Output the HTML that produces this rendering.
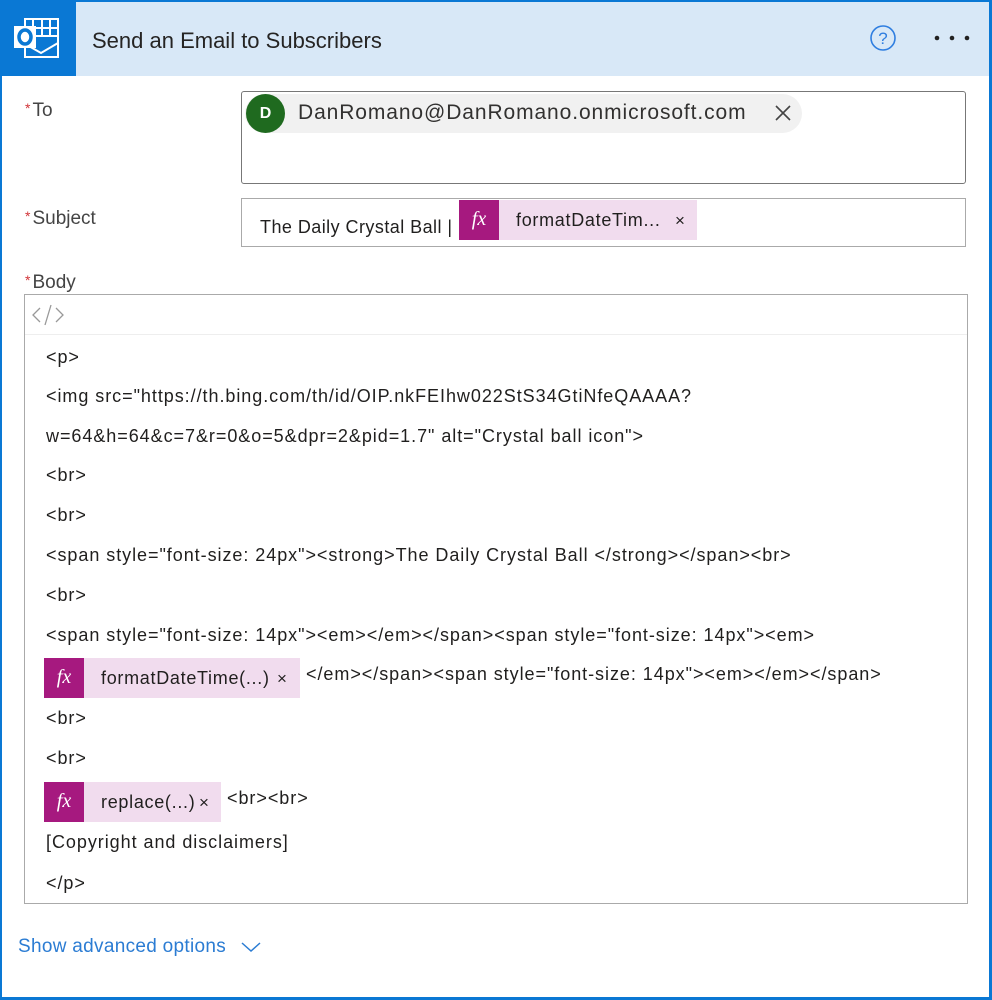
<!DOCTYPE html>
<html><head><meta charset="utf-8"><style>
*{margin:0;padding:0;box-sizing:border-box}
body{width:992px;height:1000px;background:#fff;font-family:"Liberation Sans",sans-serif;color:#201f1e;position:relative;overflow:hidden}
.frame{position:absolute;left:0;top:0;width:992px;height:1000px;border:2px solid #0a78d4;border-width:2px 3px 3px 2px}
.hdr{position:absolute;left:0;top:0;width:992px;height:76px;background:#d8e8f7}
.ico{position:absolute;left:0;top:0;width:76px;height:76px;background:#0a78d4}
.title{position:absolute;left:92px;top:28px;font-size:22px;color:#252423}
.lbl{position:absolute;left:25px;font-size:19px;color:#444}
.lbl b{color:#d13438;font-weight:normal;font-size:14px;vertical-align:top;margin-right:2px}
.box{position:absolute;border:1px solid #8a8886}
.chip{position:absolute;background:#f1dcee;height:40px}
.chip span{letter-spacing:.7px}
.fx{position:absolute;left:0;top:0;width:40px;height:40px;background:#a6197f;color:#fff;font-family:"Liberation Serif",serif;font-style:italic;font-size:20px;text-align:center;line-height:38px}
.ln{position:absolute;left:46px;font-size:18px;letter-spacing:.95px;color:#201f1e;white-space:nowrap}
</style></head><body>
<div class="hdr"></div>
<div class="ico"><svg width="76" height="76" viewBox="0 0 76 76"><rect x="25" y="19" width="33" height="38" fill="none" stroke="#fff" stroke-width="2"/><path d="M33 19v17M42 19v17M50 19v17M25 28h33M25 36h33M27 45l14 8 17-10" stroke="#fff" stroke-width="2" fill="none"/><rect x="14" y="26" width="22" height="22" fill="#fff"/><ellipse cx="25" cy="37" rx="6" ry="7" fill="none" stroke="#0a78d4" stroke-width="3.5"/></svg></div>
<div class="title">Send an Email to Subscribers</div>
<svg style="position:absolute;left:869px;top:24px" width="28" height="28" viewBox="0 0 28 28"><circle cx="14" cy="14" r="12" fill="none" stroke="#2f7ee0" stroke-width="1.6"/><text x="14" y="20" text-anchor="middle" font-size="17" fill="#2f7ee0" font-family="Liberation Sans">?</text></svg>
<svg style="position:absolute;left:933px;top:34px" width="40" height="8"><circle cx="4" cy="4" r="2.3" fill="#222"/><circle cx="19" cy="4" r="2.3" fill="#222"/><circle cx="34" cy="4" r="2.3" fill="#222"/></svg>

<div class="lbl" style="top:100px"><b>*</b>To</div>
<div class="box" style="left:241px;top:91px;width:725px;height:93px;border-radius:3px;border-color:#777"></div>
<div style="position:absolute;left:245px;top:94px;width:557px;height:39px;background:#f1f1f1;border-radius:20px"></div>
<div style="position:absolute;left:246px;top:94px;width:39px;height:39px;border-radius:50%;background:#1f6a1f;color:#fff;font-weight:bold;font-size:16px;text-align:center;line-height:39px">D</div>
<div style="position:absolute;left:298px;top:101px;font-size:21px;letter-spacing:.9px;color:#323130">DanRomano@DanRomano.onmicrosoft.com</div>
<svg style="position:absolute;left:774px;top:104px" width="18" height="18"><path d="M2 2L16 16M16 2L2 16" stroke="#444" stroke-width="1.6"/></svg>

<div class="lbl" style="top:208px"><b>*</b>Subject</div>
<div class="box" style="left:241px;top:198px;width:725px;height:49px;border-color:#aaa"></div>
<div style="position:absolute;left:260px;top:217px;font-size:18px;letter-spacing:.45px">The Daily Crystal Ball |</div>
<div class="chip" style="left:459px;top:200px;width:238px"><div class="fx">fx</div><span style="position:absolute;left:57px;top:10px;font-size:18px">formatDateTim...</span><span style="position:absolute;left:216px;top:11px;font-size:17px">×</span></div>

<div class="lbl" style="top:272px"><b>*</b>Body</div>
<div class="box" style="left:24px;top:294px;width:944px;height:610px;border-color:#aaa"></div>
<div style="position:absolute;left:25px;top:334px;width:942px;height:1px;background:#eee"></div>
<svg style="position:absolute;left:30px;top:302px" width="36" height="26"><path d="M10 6L3 13L10 20M26 6L33 13L26 20M21 3L15 23" stroke="#999" stroke-width="1.3" fill="none"/></svg>

<div class="ln" style="top:347px">&lt;p&gt;</div>
<div class="ln" style="top:386px">&lt;img src="https://th.bing.com/th/id/OIP.nkFEIhw022StS34GtiNfeQAAAA?</div>
<div class="ln" style="top:426px">w=64&amp;h=64&amp;c=7&amp;r=0&amp;o=5&amp;dpr=2&amp;pid=1.7" alt="Crystal ball icon"&gt;</div>
<div class="ln" style="top:465px">&lt;br&gt;</div>
<div class="ln" style="top:505px">&lt;br&gt;</div>
<div class="ln" style="top:545px">&lt;span style="font-size: 24px"&gt;&lt;strong&gt;The Daily Crystal Ball &lt;/strong&gt;&lt;/span&gt;&lt;br&gt;</div>
<div class="ln" style="top:585px">&lt;br&gt;</div>
<div class="ln" style="top:625px">&lt;span style="font-size: 14px"&gt;&lt;em&gt;&lt;/em&gt;&lt;/span&gt;&lt;span style="font-size: 14px"&gt;&lt;em&gt;</div>
<div class="chip" style="left:44px;top:658px;width:256px"><div class="fx">fx</div><span style="position:absolute;left:57px;top:10px;font-size:18px">formatDateTime(...)</span><span style="position:absolute;left:276px;top:11px;font-size:17px;left:233px;letter-spacing:0">×</span></div>
<div class="ln" style="left:306px;top:664px">&lt;/em&gt;&lt;/span&gt;&lt;span style="font-size: 14px"&gt;&lt;em&gt;&lt;/em&gt;&lt;/span&gt;</div>
<div class="ln" style="top:708px">&lt;br&gt;</div>
<div class="ln" style="top:748px">&lt;br&gt;</div>
<div class="chip" style="left:44px;top:782px;width:177px"><div class="fx">fx</div><span style="position:absolute;left:57px;top:10px;font-size:18px">replace(...)</span><span style="position:absolute;left:155px;top:11px;font-size:17px;letter-spacing:0">×</span></div>
<div class="ln" style="left:227px;top:788px">&lt;br&gt;&lt;br&gt;</div>
<div class="ln" style="top:832px">[Copyright and disclaimers]</div>
<div class="ln" style="top:873px">&lt;/p&gt;</div>

<div style="position:absolute;left:18px;top:936px;font-size:19px;letter-spacing:.3px;color:#2b7cd3">Show advanced options</div>
<svg style="position:absolute;left:240px;top:940px" width="22" height="14"><path d="M2 3L11 11L20 3" stroke="#2b7cd3" stroke-width="1.5" fill="none"/></svg>
<div class="frame"></div>
</body></html>
